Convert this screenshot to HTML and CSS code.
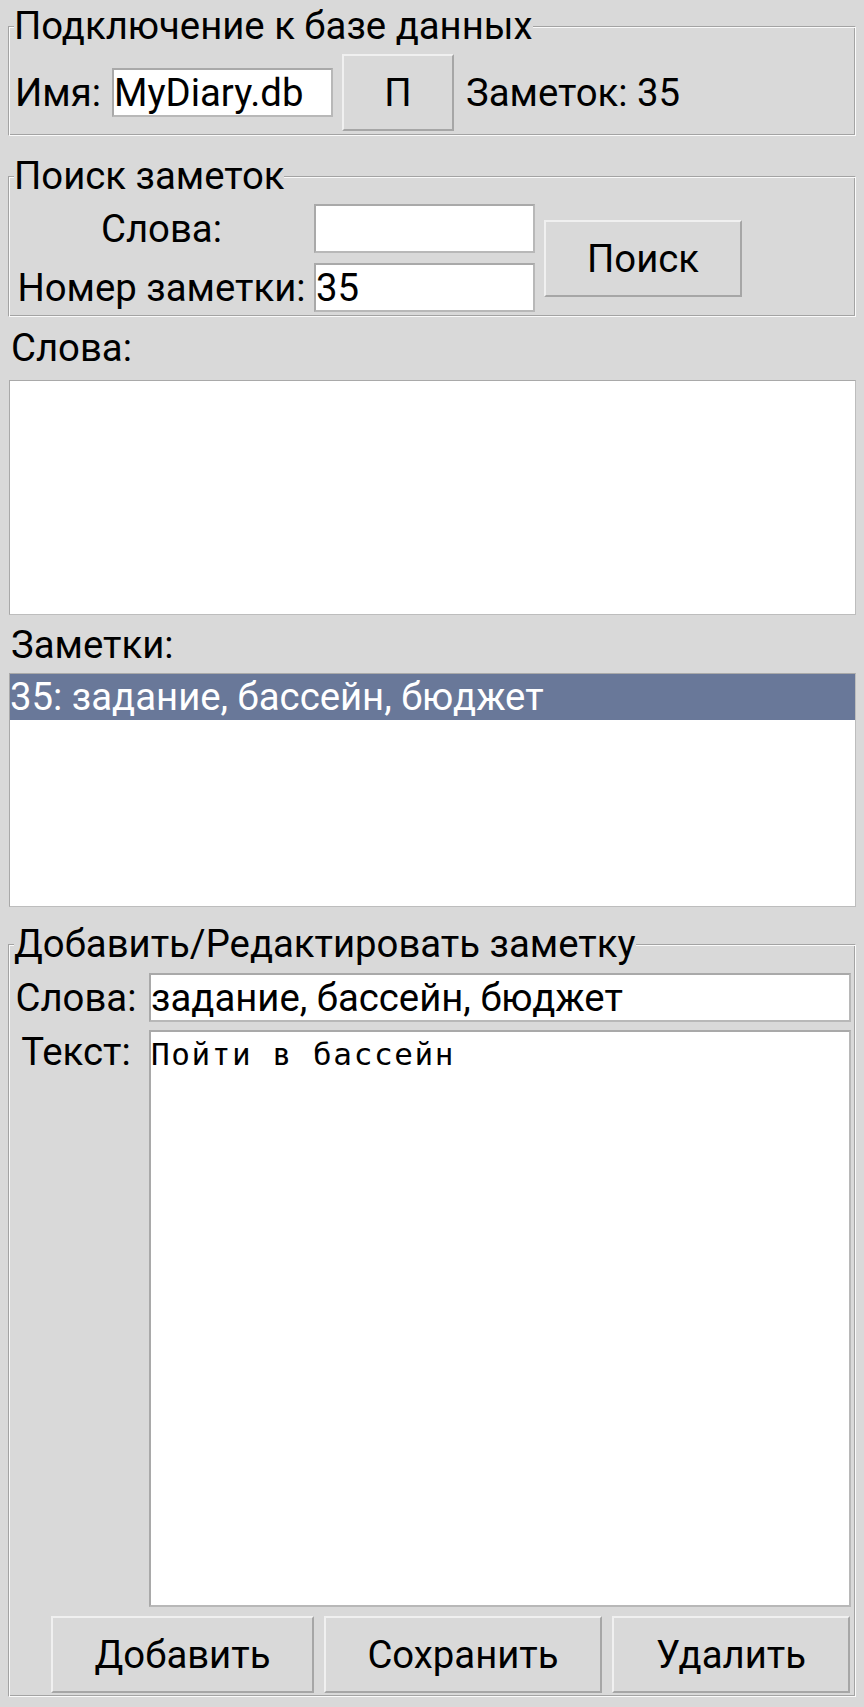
FILE: index.html
```html
<!DOCTYPE html>
<html lang="ru">
<head>
<meta charset="utf-8">
<title>MyDiary</title>
<link rel="stylesheet" href="styles.css">
</head>
<body>
<div class="app">
  <fieldset class="group g-db">
    <legend>Подключение к базе данных</legend>
    <div class="db-row">
      <span class="lbl name-lbl">Имя:</span>
      <div class="entry e-name">MyDiary.db</div>
      <div class="btn b-p">П</div>
      <span class="lbl count">Заметок: 35</span>
    </div>
  </fieldset>

  <fieldset class="group g-search">
    <legend>Поиск заметок</legend>
    <div class="search-grid">
      <span class="lbl s-lbl">Слова:</span>
      <div class="entry e-search"></div>
      <div class="btn b-search">Поиск</div>
      <span class="lbl s-lbl">Номер заметки:</span>
      <div class="entry e-search">35</div>
    </div>
  </fieldset>

  <div class="caption cap-words">Слова:</div>
  <div class="listbox lb-words"></div>

  <div class="caption cap-notes">Заметки:</div>
  <div class="listbox lb-notes">
    <div class="item selected">35: задание, бассейн, бюджет</div>
  </div>

  <fieldset class="group g-edit">
    <legend>Добавить/Редактировать заметку</legend>
    <div class="edit-grid">
      <span class="lbl e-lbl">Слова:</span>
      <div class="entry e-words">задание, бассейн, бюджет</div>
      <span class="lbl e-lbl t-lbl">Текст:</span>
      <div class="textbox">Пойти в бассейн</div>
    </div>
    <div class="actions">
      <div class="btn b-add">Добавить</div>
      <div class="btn b-save">Сохранить</div>
      <div class="btn b-del">Удалить</div>
    </div>
  </fieldset>
</div>
</body>
</html>
```

FILE: styles.css
```css
html, body {
  margin: 0;
  padding: 0;
}

body {
  background: #d9d9d9;
  color: #000;
  font-family: Roboto, "Liberation Sans", sans-serif;
  font-size: 38.3px;
  width: 864px;
  height: 1707px;
  overflow: hidden;
}

.app {
  display: flex;
  flex-direction: column;
  padding: 0 8px;
}

.group {
  margin: 0;
  padding: 0 0 4px 0;
  min-width: 0;
  border: 1px solid;
  border-color: #a3a3a3 #fafafa #fafafa #a3a3a3;
  box-shadow: inset 1px 1px 0 #fafafa, inset -1px -1px 0 #a3a3a3;
}

.group legend {
  padding: 0;
  margin-left: 5px;
  line-height: 38px;
  background: #d9d9d9;
}

.g-db { margin-top: 7px; }
.g-search { margin-top: 21px; }
.g-edit { margin-top: 18px; padding-bottom: 3px; }

.lbl {
  white-space: nowrap;
  line-height: 41px;
}

.entry {
  box-sizing: border-box;
  height: 49px;
  background: #fff;
  border: 2px solid;
  border-color: #a9a9a9 #b8b8b8 #b8b8b8 #a9a9a9;
  line-height: 45px;
  padding-left: 0;
  white-space: nowrap;
  overflow: hidden;
}

.btn {
  box-sizing: border-box;
  height: 77px;
  background: #d9d9d9;
  border: 2px solid;
  border-color: #f0f0f0 #a6a6a6 #a6a6a6 #f0f0f0;
  display: flex;
  align-items: center;
  justify-content: center;
  white-space: nowrap;
}

.db-row {
  display: flex;
  align-items: center;
  margin-top: 9px;
}

.name-lbl {
  width: 103px;
  box-sizing: border-box;
  padding-left: 6px;
}

.e-name { width: 221px; }

.b-p {
  width: 112px;
  margin-left: 9px;
}

.count { margin-left: 12px; }

.search-grid {
  display: grid;
  grid-template-columns: 305px 221px 207px;
  grid-template-rows: 49px 49px;
  row-gap: 10px;
  align-items: center;
  margin-top: 9px;
}

.s-lbl { justify-self: center; }

.b-search {
  grid-column: 3;
  grid-row: 1 / 3;
  margin-left: 9px;
}

.e-search { grid-column: 2; }

.caption {
  line-height: 41px;
  padding-left: 3px;
}

.cap-words { margin: 10px 0 12px; }
.cap-notes { margin: 9px 0 8px; }

.listbox {
  box-sizing: border-box;
  margin-left: 1px;
  background: #fff;
  border: 1px solid;
  border-color: #a9a9a9 #bdbdbd #bdbdbd #a9a9a9;
}

.lb-words { height: 235px; }
.lb-notes { height: 234px; }

.item {
  line-height: 46px;
  white-space: nowrap;
}

.item.selected {
  background: #697899;
  color: #fff;
}

.edit-grid {
  display: grid;
  grid-template-columns: 134px 702px;
  grid-template-rows: 49px 577px;
  column-gap: 6px;
  row-gap: 8px;
  margin-top: 10px;
}

.e-lbl {
  justify-self: center;
  align-self: center;
}

.t-lbl {
  align-self: start;
  margin-top: 1px;
}

.textbox {
  box-sizing: border-box;
  background: #fff;
  border: 2px solid;
  border-color: #a9a9a9 #b8b8b8 #b8b8b8 #a9a9a9;
  font-family: "DejaVu Sans Mono", "Liberation Mono", monospace;
  font-size: 31px;
  letter-spacing: 1.6px;
  line-height: 36px;
  padding: 4px 0 0 0;
  white-space: pre;
}

.actions {
  display: flex;
  justify-content: flex-end;
  gap: 10px;
  margin-top: 9px;
  padding-right: 5px;
}

.b-add { width: 263px; }
.b-save { width: 278px; }
.b-del { width: 238px; }
```
